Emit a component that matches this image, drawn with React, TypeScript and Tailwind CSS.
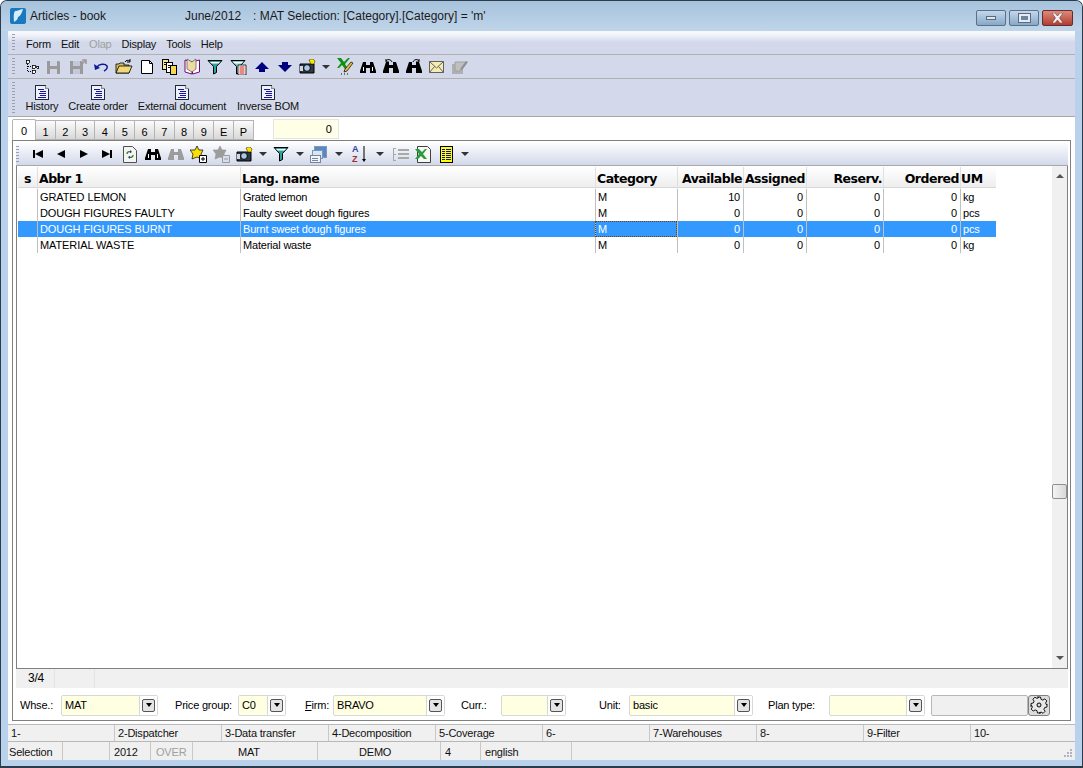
import React from 'react';

const Doc = () => (
  <svg width="14" height="15" viewBox="0 0 14 15" shapeRendering="crispEdges">
    <path d="M.5.5h10l3 3v11H.5z" fill="#eef0fa" stroke="#202838" />
    <path d="M10.500.5v3h3" fill="#c8c8c8" stroke="#909090" />
    <path d="M3 4h6M5 6h6M4 8h7M5 10h6M3 12h8" stroke="#1414a0" />
  </svg>
);

const Tree = () => (
  <svg width="16" height="16" viewBox="0 0 16 16" shapeRendering="crispEdges">
    <path d="M3.500 3v10M3.500 7.500h4M3.500 12.500h4" stroke="#000" strokeDasharray="1 1" />
    <path d="M2 1h3v3H2zM8 6h3v3H8zM8 11h3v3H8zM12.500 7h2v2h-2z" fill="#fff" stroke="#000" strokeWidth="0.800" />
  </svg>
);

const Save = ({ arrow }: { arrow?: boolean }) => (
  <svg width="18" height="16" viewBox="0 0 18 16">
    <path d="M1 2h12l1 1v12H1z" fill="#9a9a9a" />
    <path d="M4 2h7v5H4zM4 10h7v5H4z" fill={arrow ? '#c4c8d8' : '#d0d4e4'} />
    {arrow && <path d="M12 6l5-5M13 1h4v4" stroke="#9a9a9a" strokeWidth="1.600" fill="none" />}
  </svg>
);

const Undo = () => (
  <svg width="16" height="14" viewBox="0 0 16 14">
    <path d="M4 7c2-3 8-4 10-1 1 2-1 4-3 5" fill="none" stroke="#0c1c9c" strokeWidth="1.500" />
    <path d="M1 4l1 6 5-2z" fill="#0c1c9c" />
  </svg>
);

const Open = () => (
  <svg width="18" height="16" viewBox="0 0 18 16">
    <path d="M1 5h3l1-1h4v2h5v8H1z" fill="#d8c060" stroke="#000" strokeWidth="0.800" />
    <path d="M1 14l3-7h13l-3 7z" fill="#f0d878" stroke="#000" strokeWidth="0.800" />
    <path d="M10 3c1-2 3-2 5-1M15 0v3h-3" fill="none" stroke="#000" strokeWidth="1" />
  </svg>
);

const NewFile = () => (
  <svg width="14" height="16" viewBox="0 0 14 16">
    <path d="M1.500 1.500h8l3 3v10h-11z" fill="#fff" stroke="#000" />
    <path d="M9.500 1.500v3h3" fill="none" stroke="#000" />
  </svg>
);

const CopyDocs = () => (
  <svg width="18" height="18" viewBox="0 0 18 18" shapeRendering="crispEdges">
    <path d="M1.500 1.500h6v10h-6z" fill="#f4e88c" stroke="#000" />
    <path d="M5.500 4.500h6v10h-6z" fill="#fff" stroke="#000" />
    <path d="M9.500 7.500h6v9h-6z" fill="#f4d850" stroke="#000" />
    <path d="M3 4h3M3 6h2M7 7h3M7 9h2" stroke="#000" />
  </svg>
);

const Book = () => (
  <svg width="17" height="17" viewBox="0 0 17 17">
    <path d="M1 2l7 2v12l-7-2z" fill="#fff" stroke="#800080" />
    <path d="M15.500 2l-7 2v12l7-2z" fill="#fff" stroke="#800080" />
    <path d="M3 1l5 3 4-3v10l-4 3-5-3z" fill="#ecdca0" stroke="#505050" strokeWidth="0.700" />
  </svg>
);

const Funnel = ({ doc }: { doc?: boolean }) => (
  <svg width="17" height="16" viewBox="0 0 17 16">
    <path d="M1 1.500h14l-5.500 6v6l-3 1.500V7.500z" fill={doc ? '#7cc' : '#30a0a0'} stroke="#000" />
    <path d="M3 3h10l-1.500 1.500h-7z" fill="#fff" />
    {doc && <path d="M8 6h8v10H8z" fill="#fff" stroke="#000" strokeWidth="0.800" />}
    {doc && <path d="M9.500 8h5M9.500 10h5M9.500 12h5M9.500 14h5" stroke="#d01010" />}
  </svg>
);

const Arrow = ({ down }: { down?: boolean }) => (
  <svg width="14" height="10" viewBox="0 0 14 10">
    {down ? <path d="M0 3h4V0h6v3h4l-7 7z" fill="#000080" /> : <path d="M7 0l7 7h-4v3H4V7H0z" fill="#000080" />}
  </svg>
);

const Camera = () => (
  <svg width="17" height="15" viewBox="0 0 17 15">
    <path d="M1 5h14v9H1z" fill="#303844" stroke="#000" />
    <circle cx="8" cy="9" r="3.400" fill="#a8c8e8" stroke="#000" />
    <path d="M1 7h3v5H1z" fill="#d0d8e0" />
    <path d="M10 1l2-1 2 0 2 2-1 3-3 0z" fill="#f8e800" stroke="#403000" strokeWidth="0.600" />
  </svg>
);

const Caret = () => <span className="w-0 h-0 border-x-[4px] border-x-transparent border-t-[4px] border-t-[#333]" />;

const ExcelPen = () => (
  <svg width="18" height="19" viewBox="0 0 18 19">
    <path d="M1 1h4l3 4 4-4h2L9 7l3 5H9L6 8l-3 3H1l4-5z" fill="#109010" />
    <path d="M9 12l6-7 2 1-6 8-3 1z" fill="#e8c040" stroke="#000" strokeWidth="0.700" />
    <path d="M5 17h1M8 17h1M11 17h1" stroke="#000" />
  </svg>
);

const Binoculars = ({ gray, curl }: { gray?: boolean; curl?: 'l' | 'r' }) => {
  const c = gray ? '#9c9c9c' : '#000';
  return (
    <svg width="16" height="16" viewBox="0 0 16 16">
      <path d="M3 3h3v3h4V3h3l3 9v2h-6V9H6v5H0v-2z" fill={c} />
      {!gray && !curl && <path d="M3 8h1v4H3zM12 8h1v4h-1z" fill="#fff" />}
      {curl === 'l' && <path d="M9 3C8 0 4 0 3 2M3 0v3h3" fill="none" stroke="#000" />}
      {curl === 'r' && <path d="M7 3c1-3 5-3 6-1M13 0v3h-3" fill="none" stroke="#000" />}
    </svg>
  );
};

const Mail = () => (
  <svg width="15" height="12" viewBox="0 0 15 12">
    <path d="M.500.500h14v11H.500z" fill="#f4ecb0" stroke="#606060" />
    <path d="M.500.500L7.500 7l7-6.500M.500 11.500L5.500 5.500M14.500 11.500l-5-6" fill="none" stroke="#606060" />
  </svg>
);

const GrayNote = () => (
  <svg width="17" height="16" viewBox="0 0 17 16">
    <path d="M1 5h11v10H1z" fill="#b0b0b0" />
    <path d="M4 3h11v2l-6 7H4z" fill="#c0c0c0" stroke="#a0a0a0" />
    <path d="M9 10l6-8 2 1-6 8z" fill="#909090" />
  </svg>
);

const Nav = ({ kind }: { kind: 'first' | 'prev' | 'next' | 'last' }) => (
  <svg width="10" height="8" viewBox="0 0 10 8">
    {kind === 'first' && <path d="M0 0h2v8H0zM2 4l8-4v8z" fill="#000" />}
    {kind === 'prev' && <path d="M1 4l8-4v8z" fill="#000" />}
    {kind === 'next' && <path d="M9 4L1 0v8z" fill="#000" />}
    {kind === 'last' && <path d="M10 0H8v8h2zM8 4L0 0v8z" fill="#000" />}
  </svg>
);

const Refresh = () => (
  <svg width="14" height="17" viewBox="0 0 14 17">
    <path d="M.500.500h9l4 4v12H.500z" fill="#f4f4f0" stroke="#505050" />
    <path d="M4 8c0-2 2-3 4-2M10 9c0 2-2 3-4 2" fill="none" stroke="#308030" strokeWidth="1.400" />
    <path d="M7 4l2 2-2 1zM7 13l-2-2 2-1z" fill="#303080" />
  </svg>
);

const StarDoc = ({ minus }: { minus?: boolean }) => (
  <svg width="18" height="17" viewBox="0 0 18 17">
    <path d="M7 0l2 4 4 0-2 4 1 5-5-2-5 2 1-5-3-4h5z" fill={minus ? '#9c9c9c' : '#f8e000'} stroke={minus ? '#9c9c9c' : '#000'} strokeWidth="0.700" />
    <path d="M9.500 9.500h7v7h-7z" fill={minus ? '#d8dcec' : '#fff'} stroke={minus ? '#9c9c9c' : '#000'} />
    <path d="M11 13h4" stroke={minus ? '#9c9c9c' : '#000'} />
    {!minus && <path d="M13 11v4" stroke="#000" />}
  </svg>
);

const Columns = () => (
  <svg width="17" height="17" viewBox="0 0 17 17" shapeRendering="crispEdges">
    <path d="M4.500 .5h12v11h-12z" fill="#5888c0" stroke="#8098b8" />
    <path d="M2.500 4.500h10v8h-10z" fill="#d8e4f4" stroke="#8098b8" />
    <path d="M.500 9.500h10v7h-10z" fill="#f4f4f4" stroke="#7088a8" />
    <path d="M2 12h6M2 14h6" stroke="#7088a8" />
  </svg>
);

const Sort = () => (
  <svg width="16" height="20" viewBox="0 0 16 20">
    <text x="0" y="8" fontSize="9" fontFamily="'Liberation Sans', sans-serif" fontWeight="700" fill="#3040a0">A</text>
    <text x="0" y="18" fontSize="9" fontFamily="'Liberation Sans', sans-serif" fontWeight="700" fill="#a03030">Z</text>
    <path d="M12 2v14" stroke="#000" />
    <path d="M10 15h4l-2 3z" fill="#000" />
  </svg>
);

const ListGray = () => (
  <svg width="17" height="13" viewBox="0 0 17 13" shapeRendering="crispEdges">
    <path d="M4 .5H1.500v12H4M1.500 6.500H4" fill="none" stroke="#a8a8a8" />
    <path d="M6 2h11M6 6h11M6 10h11" stroke="#a8a8a8" strokeWidth="1.500" />
  </svg>
);

const ExcelDoc = () => (
  <svg width="17" height="17" viewBox="0 0 17 17">
    <path d="M2.500.500h10l3 3v13h-13z" fill="#f8f8f4" stroke="#404040" />
    <path d="M0 3h4l3 3 3-3h2L8 8l4 5H9L6 10l-3 3H0l4-5z" fill="#2a9c3c" />
  </svg>
);

const YellowList = () => (
  <svg width="13" height="17" viewBox="0 0 13 17" shapeRendering="crispEdges">
    <path d="M.500.500h12v16H.500z" fill="#ffff00" stroke="#000" />
    <path d="M2 3h9M2 5h9M2 7h9M2 9h9M2 11h9M2 13h9" stroke="#10108c" />
    <path d="M5.500 3v11" stroke="#ffff00" />
  </svg>
);

const Gear = () => (
  <svg width="18" height="18" viewBox="0 0 18 18">
    <path d="M7.500 1h3l.5 2.300 1.800.8 2-1.200 2 2-1.200 2 .8 1.800L17 8v3l-2.300.5-.8 1.800 1.200 2-2 2-2-1.200-1.800.8L10.500 17h-3L7 14.700l-1.800-.8-2 1.200-2-2 1.200-2-.8-1.800L1 10.500v-3l2.300-.5.800-1.800-1.200-2 2-2 2 1.200 1.800-.8z" fill="#e8e8e8" stroke="#000" strokeWidth="0.900" />
    <circle cx="9" cy="9" r="2" fill="#dcdcdc" stroke="#000" />
  </svg>
);

const Grip = () => (
  <span className="w-[3px] self-stretch my-[3px] bg-[repeating-linear-gradient(to_bottom,#9aa0b4_0,#9aa0b4_1px,transparent_1px,transparent_3px)]" />
);

const Tb = ({ w = 23, children }: { w?: 14 | 18 | 23; children: React.ReactNode }) => (
  <span className={`flex items-center justify-center h-[22px] shrink-0 ${w === 14 ? 'w-[14px]' : w === 18 ? 'w-[18px]' : 'w-[23px]'}`}>
    {children}
  </span>
);

const Combo = ({ value, w }: { value: string; w: string }) => (
  <div className={`flex h-[21px] border border-[#d8d8d8] rounded-[2px] bg-[#ffffe1] ${w}`}>
    <span className="flex-1 pl-[3px] leading-[19px]">{value}</span>
    <span className="w-[18px] bg-white border-l border-[#d8d8d8] flex items-center justify-center">
      <span className="w-[13px] h-[13px] rounded-[2px] border border-[#555] bg-[#e4e4e4] flex items-center justify-center">
        <span className="w-0 h-0 border-x-[3px] border-x-transparent border-t-[4px] border-t-black" />
      </span>
    </span>
  </div>
);

const rows = [
  ['GRATED LEMON', 'Grated lemon', 'M', '10', '0', '0', '0', 'kg'],
  ['DOUGH FIGURES FAULTY', 'Faulty sweet dough figures', 'M', '0', '0', '0', '0', 'pcs'],
  ['DOUGH FIGURES BURNT', 'Burnt sweet dough figures', 'M', '0', '0', '0', '0', 'pcs'],
  ['MATERIAL WASTE', 'Material waste', 'M', '0', '0', '0', '0', 'kg'],
];

const gridCols = 'grid grid-cols-[19px_203px_355px_82px_66px_63px_77px_77px_36px] w-[978px]';
const tabs = ['1', '2', '3', '4', '5', '6', '7', '8', '9', 'E', 'P'];
const fnKeys = ['1-', '2-Dispatcher', '3-Data transfer', '4-Decomposition', '5-Coverage', '6-', '7-Warehouses', '8-', '9-Filter', '10-'];
const actions = [
  ['History', 'w-[38px]'],
  ['Create order', 'w-[74px]'],
  ['External document', 'w-[94px]'],
  ['Inverse BOM', 'w-[78px]'],
];

export default function App() {
  return (
    <div className="w-[1083px] h-[768px] overflow-hidden flex flex-col rounded-t-[7px] border-x border-b-2 border-t border-[#2c3c4c] bg-[#b9d1ea] text-[11px] tracking-[-0.2px] text-black font-['Liberation_Sans',sans-serif]">
      {/* title bar */}
      <div className="h-[30px] shrink-0 flex items-center pl-[8px] pr-[9px] bg-gradient-to-b from-[#a6c2dc] to-[#c0d5ea] text-[12px] tracking-normal text-[#1a1a1a]">
        <svg width="18" height="18" viewBox="0 0 18 18" className="mr-[3px] shrink-0">
          <rect x="1" y="1" width="16" height="16" rx="2" fill="#1878c0" />
          <path d="M6 4c3 0 6-2 8-2-1 3-2 7-5 8 0 2-2 4-4 5 0-3-1-8 1-11z" fill="#d8ecf8" />
        </svg>
        <span className="w-[155px] shrink-0">Articles - book</span>
        <span className="w-[68px] shrink-0">June/2012</span>
        <span className="flex-1">: MAT Selection: [Category].[Category] = 'm'</span>
        <div className="flex gap-[3px] mt-[4px]">
          <span className="w-[30px] h-[16px] rounded-[2px] border border-[#5c7088] bg-gradient-to-b from-[#c4d8ec] to-[#88a8c8] flex items-center justify-center">
            <span className="w-[10px] h-[4px] bg-[#dfe6ee] border border-[#566a80]" />
          </span>
          <span className="w-[30px] h-[16px] rounded-[2px] border border-[#5c7088] bg-gradient-to-b from-[#c4d8ec] to-[#88a8c8] flex items-center justify-center">
            <span className="w-[11px] h-[8px] bg-[#6d86a0] border-2 border-[#e4eaf0] outline outline-1 outline-[#566a80]" />
          </span>
          <span className="w-[31px] h-[16px] rounded-[2px] border border-[#6c2a2a] bg-gradient-to-b from-[#dc8a7c] to-[#b03c30] flex items-center justify-center">
            <svg width="13" height="10" viewBox="0 0 13 10"><path d="M1 0h3l2.500 3L9 0h3L8.500 5 12 10H9L6.500 7 4 10H1l3.500-5z" fill="#f0f0f0" stroke="#5a2a2a" strokeWidth="0.500" /></svg>
          </span>
        </div>
      </div>

      {/* client area */}
      <div className="flex-1 mx-[7px] mb-[6px] flex flex-col bg-white min-h-0">
        {/* menu bar */}
        <div className="h-[24px] shrink-0 flex bg-gradient-to-b from-[#f6f8fc] from-10% via-[#d3d9ea] via-50% to-[#d3d9ea] border-b border-[#b0b0b0] pl-[4px]">
          <Grip />
          <div className="flex items-center pl-[11px] pt-[4px] gap-[10px] text-[#111]">
            <span>Form</span>
            <span>Edit</span>
            <span className="text-[#a0a0a0]">Olap</span>
            <span>Display</span>
            <span>Tools</span>
            <span>Help</span>
          </div>
        </div>

        {/* main toolbar */}
        <div className="h-[24px] shrink-0 flex items-center bg-[#d3d9ea] border-b border-[#b0b0b0] pl-[4px]">
          <Grip />
          <div className="flex items-center pl-[5px]">
            <Tb><Tree /></Tb>
            <Tb><Save /></Tb>
            <Tb><Save arrow /></Tb>
            <Tb><Undo /></Tb>
            <Tb><Open /></Tb>
            <Tb><NewFile /></Tb>
            <Tb><CopyDocs /></Tb>
            <Tb><Book /></Tb>
            <Tb><Funnel /></Tb>
            <Tb><Funnel doc /></Tb>
            <Tb><Arrow /></Tb>
            <Tb><Arrow down /></Tb>
            <Tb><Camera /></Tb>
            <Tb w={14}><Caret /></Tb>
            <Tb><ExcelPen /></Tb>
            <Tb><Binoculars /></Tb>
            <Tb><Binoculars curl="l" /></Tb>
            <Tb><Binoculars curl="r" /></Tb>
            <Tb><Mail /></Tb>
            <Tb><GrayNote /></Tb>
          </div>
        </div>

        {/* action buttons */}
        <div className="h-[38px] shrink-0 flex bg-[#d3d9ea] border-b border-[#a8a8a8] pl-[4px] text-[#111]">
          <Grip />
          <div className="flex pl-[8px] pt-[6px] leading-[13px]">
            {actions.map(([label, cls]) => (
              <div key={label} className={`flex flex-col items-center ${cls}`}>
                <Doc />
                <span className="whitespace-nowrap">{label}</span>
              </div>
            ))}
          </div>
        </div>

        {/* tab strip */}
        <div className="h-[23px] shrink-0 flex items-end pl-[4px]">
          <div className="-mb-[1px] w-[24px] h-[22px] bg-white border border-b-0 border-[#b4b4b4] rounded-t-[2px] flex justify-center pt-[3px]">0</div>
          {tabs.map((t) => (
            <div key={t} className="w-[19.800px] h-[20px] bg-gradient-to-b from-[#fbfbfb] to-[#d8d8d8] border border-l-0 border-[#b4b4b4] flex justify-center pt-[3px]">
              {t}
            </div>
          ))}
          <div className="ml-[19px] mb-[1px] w-[66px] h-[20px] bg-[#ffffe8] border border-[#e4e4e4] flex items-center justify-end pr-[6px]">0</div>
        </div>

        {/* group box */}
        <div className="flex-1 min-h-0 ml-[4px] mr-[4px] flex flex-col border border-[#808080] pl-[3px] pr-[2px] pt-[2px]">
          {/* grid toolbar */}
          <div className="h-[23px] shrink-0 flex items-center bg-gradient-to-b from-[#fbfcfe] to-[#d3d9ea] border-b border-[#a8a8a8]">
            <Grip />
            <div className="flex items-center pl-[7px]">
              <Tb><Nav kind="first" /></Tb>
              <Tb><Nav kind="prev" /></Tb>
              <Tb><Nav kind="next" /></Tb>
              <Tb><Nav kind="last" /></Tb>
              <Tb><Refresh /></Tb>
              <Tb><Binoculars /></Tb>
              <Tb><Binoculars gray /></Tb>
              <Tb><StarDoc /></Tb>
              <Tb><StarDoc minus /></Tb>
              <Tb><Camera /></Tb>
              <Tb w={14}><Caret /></Tb>
              <Tb><Funnel /></Tb>
              <Tb w={14}><Caret /></Tb>
              <Tb><Columns /></Tb>
              <Tb w={18}><Caret /></Tb>
              <Tb><Sort /></Tb>
              <Tb w={18}><Caret /></Tb>
              <Tb><ListGray /></Tb>
              <Tb><ExcelDoc /></Tb>
              <Tb><YellowList /></Tb>
              <Tb w={14}><Caret /></Tb>
            </div>
          </div>

          {/* grid */}
          <div className="flex-1 min-h-0 flex border border-t-0 border-[#808080]">
            <div className="flex-1 min-w-0 pl-[1px] pt-[1px]">
              <div className={`${gridCols} h-[21px] font-bold text-[12.500px] leading-[23px] bg-gradient-to-b from-[#ffffff] to-[#eeeeee] border-b border-[#d8d8d8] font-['DejaVu_Sans',sans-serif] tracking-[-0.500px]`}>
                <span className="text-center">s</span>
                <span className="pl-[1px] border-l border-[#e0e0e0]">Abbr 1</span>
                <span className="pl-[1px] border-l border-[#e0e0e0]">Lang. name</span>
                <span className="pl-[1px] border-l border-[#e0e0e0]">Category</span>
                <span className="text-right pr-[1px] border-l border-[#e0e0e0] whitespace-nowrap">Available</span>
                <span className="text-right pr-[1px] border-l border-[#e0e0e0]">Assigned</span>
                <span className="text-right pr-[1px] border-l border-[#e0e0e0]">Reserv.</span>
                <span className="text-right pr-[1px] border-l border-[#e0e0e0]">Ordered</span>
                <span className="border-l border-[#e0e0e0]">UM</span>
              </div>
              <div className="pt-[1px]">
                {rows.map((r, i) => {
                  const sel = i === 2;
                  const sep = 'border-l border-[#c0c0c0] h-[16px] leading-[16px] whitespace-nowrap';
                  return (
                    <div key={r[0]} className={`${gridCols} ${sel ? 'bg-[#3399ff] text-white' : ''}`}>
                      <span />
                      <span className={`${sep} pl-[2px] tracking-[-0.100px]`}>{r[0]}</span>
                      <span className={`${sep} pl-[2px]`}>{r[1]}</span>
                      <span className={`${sep} pl-[2px] ${sel ? 'outline-1 -outline-offset-1 outline-dotted outline-[#7a3a00]' : ''}`}>{r[2]}</span>
                      <span className={`${sep} text-right pr-[3px]`}>{r[3]}</span>
                      <span className={`${sep} text-right pr-[3px]`}>{r[4]}</span>
                      <span className={`${sep} text-right pr-[3px]`}>{r[5]}</span>
                      <span className={`${sep} text-right pr-[3px]`}>{r[6]}</span>
                      <span className={`${sep} pl-[2px]`}>{r[7]}</span>
                    </div>
                  );
                })}
              </div>
            </div>
            {/* scrollbar */}
            <div className="w-[15px] shrink-0 bg-[#f0f0f0] flex flex-col items-center justify-between relative py-[8px]">
              <span className="w-0 h-0 border-x-[4px] border-x-transparent border-b-[4px] border-b-[#555]" />
              <span className="absolute left-0 top-[318px] w-[15px] h-[15px] bg-gradient-to-r from-[#f4f4f4] to-[#d8d8d8] border border-[#909090] rounded-[2px]" />
              <span className="w-0 h-0 border-x-[4px] border-x-transparent border-t-[4px] border-t-[#555]" />
            </div>
          </div>

          {/* record count */}
          <div className="h-[19px] shrink-0 flex bg-[#f0f0f0] text-[12px] leading-[19px]">
            <span className="w-[39px] text-center border-r border-[#e4e4e4] pl-[2px]">3/4</span>
            <span className="w-[40px] border-r border-[#e4e4e4]" />
          </div>

          {/* filters */}
          <div className="h-[32px] shrink-0 flex items-center pl-[4px] pt-[2px]">
            <span className="w-[41px]">Whse.:</span>
            <Combo value="MAT" w="w-[97px]" />
            <span className="ml-[17px] w-[63px]">Price group:</span>
            <Combo value="C0" w="w-[48px]" />
            <span className="ml-[19px] w-[28px]"><span className="underline">F</span>irm:</span>
            <Combo value="BRAVO" w="w-[112px]" />
            <span className="ml-[16px] w-[40px]">Curr.:</span>
            <Combo value="" w="w-[65px]" />
            <span className="ml-[33px] w-[30px]">Unit:</span>
            <Combo value="basic" w="w-[124px]" />
            <span className="ml-[15px] w-[61px]">Plan type:</span>
            <Combo value="" w="w-[96px]" />
            <span className="ml-[6px] w-[97px] h-[21px] bg-[#f0f0f0] border border-[#b8b8b8] rounded-[2px]" />
            <span className="w-[22px] h-[21px] bg-[#dcdcdc] border border-[#808080] rounded-[3px] flex items-center justify-center">
              <Gear />
            </span>
          </div>
        </div>

        {/* function keys */}
        <div className="h-[18px] mt-[3px] shrink-0 flex bg-[#f0f0f0] border-y border-[#b8b8b8] text-[#111] leading-[16px]">
          {fnKeys.map((k) => (
            <span key={k} className="w-[107px] shrink-0 border-r border-[#c8c8c8] pl-[3px] last:border-r-0 whitespace-nowrap">{k}</span>
          ))}
        </div>

        {/* status bar */}
        <div className="h-[18px] shrink-0 flex bg-[#f0f0f0] text-[#111] leading-[20px]">
          <span className="w-[55px] border-r border-[#c8c8c8] pl-[1px]">Selection</span>
          <span className="w-[47px] border-r border-[#c8c8c8]" />
          <span className="w-[41px] border-r border-[#c8c8c8] pl-[4px]">2012</span>
          <span className="w-[42px] border-r border-[#c8c8c8] pl-[5px] text-[#a0a0a0]">OVER</span>
          <span className="w-[125px] border-r border-[#c8c8c8] pl-[45px]">MAT</span>
          <span className="w-[123px] border-r border-[#c8c8c8] pl-[41px]">DEMO</span>
          <span className="w-[40px] border-r border-[#c8c8c8] pl-[4px]">4</span>
          <span className="w-[91px] border-r border-[#c8c8c8] pl-[4px]">english</span>
          <span className="flex-1 flex items-end justify-end pr-[2px] pb-[2px]">
            <svg width="9" height="9" viewBox="0 0 9 9" shapeRendering="crispEdges">
              <path d="M6 0h2v2H6zM3 3h2v2H3zM6 3h2v2H6zM0 6h2v2H0zM3 6h2v2H3zM6 6h2v2H6z" fill="#b0b4bc" />
            </svg>
          </span>
        </div>
      </div>
    </div>
  );
}
